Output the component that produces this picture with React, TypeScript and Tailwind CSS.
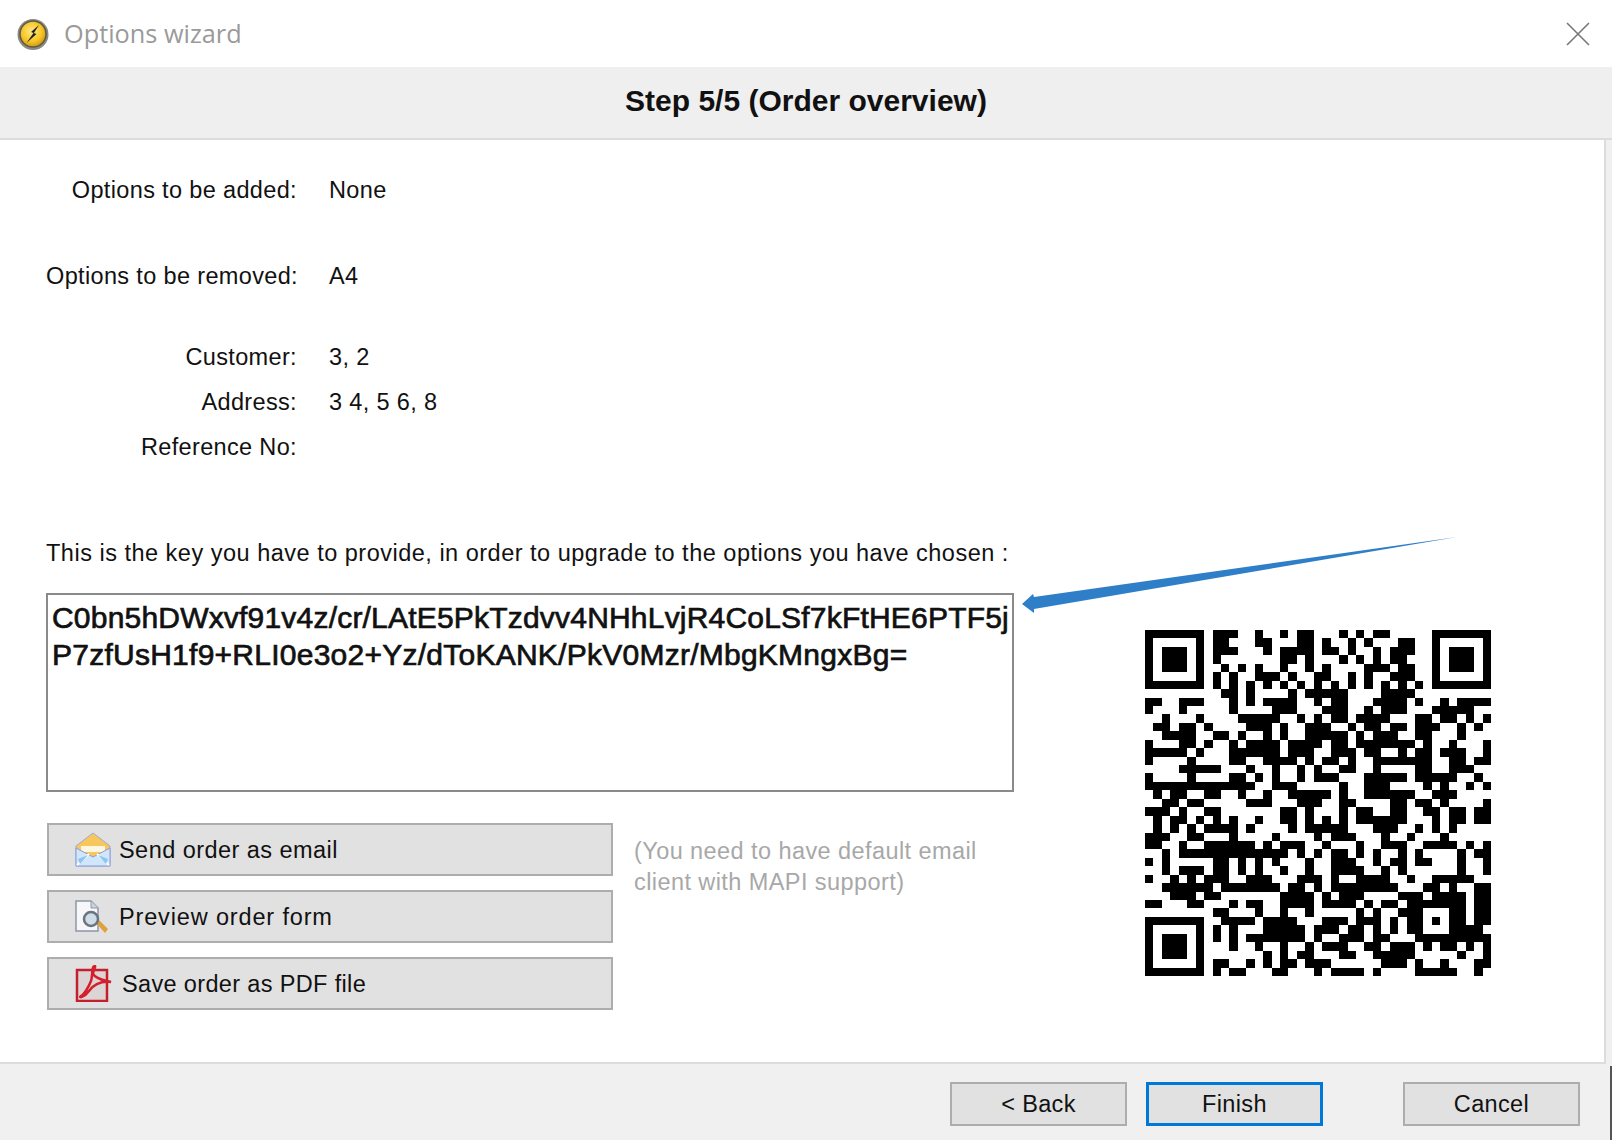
const sans = "font-['Liberation_Sans',Arial,sans-serif]";

// QR modules: one string per row, filled column runs
const qrRows = [
  '0-6 8-10 13 16 18-19 23 25 27-28 34-40',
  '0 6 8-9 13-14 18-19 21 24 26 30-31 34 40',
  '0 2-4 6 8-10 14 16-19 21-22 24 27 29-31 34 36-38 40',
  '0 2-4 6 8 16-17 19 23 25 27 29-30 34 36-38 40',
  '0 2-4 6 9 11 13 16 19 21 26-28 30-31 34 36-38 40',
  '0 6 8 10 13-15 17 20-21 24 26 29-31 34 40',
  '0-6 8 10 12 14 16 18 20 22 24 26 28 30 32 34-40',
  '9-10 12 17 19-23 28-31',
  '0-1 4-6 10 12 14-17 20 22-23 27-30 32 35 37-40',
  '0 4 10 15-17 21-23 26 28-30 34-38',
  '2 6 11-15 18 20 22-23 25-28 32-33 35-36 38 40',
  '1-2 4-5 7 12-14 16 19-21 24 26-27 29-30 32-34 37 39',
  '2-5 8-9 11 14 16 19-23 25 27-29 32-33 37',
  '0 4-5 7 10 12-15 17-20 22-23 25-31 33 36 40',
  '0-4 6 10-15 17-19 22-24 26-27 30 32-33 35-37 40',
  '0 5 10-11 14-17 19 21-22 24 27-33 36-37 39-40',
  '4-8 12 15 18 20 23-24 27 32-33 36-38',
  '0 5 10-11 13 15 18 20-22 26-30 32-36 39',
  '0-12 15-17 23 26-28 33 35 38 40',
  '1 3-4 7-8 11 14 17-21 23 26-31 34-36',
  '2-3 5-6 12-14 18-20 23-24 29-30 32-33 35 40',
  '0-2 4 7-8 16-17 19 23 25-26 29-30 33-34 36-37 39-40',
  '1 3-4 6 8 10 13 16-17 19 21 23 25-30 34 36-37 39-40',
  '1 3 5 7-10 12 17 19-23 27-29 32 34 36',
  '0-2 5-6 10 15 20 22-24 28 31 35',
  '0-1 4 7-12 14 16-18 21 25 28-30 33-36 38 40',
  '2 4-16 18 20 22-23 25 27 30 32 37 39-40',
  '0 2 8-9 11 13 15 19 22-24 27 29-30 32-33 37 40',
  '2 4-6 8-9 11 13 16 19 22-25 28 30 37 40',
  '0 3 5 7-9 12-14 18-20 22 25-28 31 34-38',
  '2-7 9-15 17-18 20 22-29 33-34 36 39-40',
  '3-5 7-8 16-19 21 23-25 30-32 34-37 39-40',
  '0-1 5-6 10 12-13 16-19 21-24 26 28-29 31-37 39-40',
  '8-9 13 16 19 25 27 30-32 36-37 39-40',
  '0-6 9-12 14-17 21-23 25-27 29 31-32 34 36-37 39-40',
  '0 6 8 10 14-18 20-22 24-25 27 29 31-32 36-39',
  '0 2-4 6 8 10 12-18 20 23-25 27-28 32-40',
  '0 2-4 6 10 13 16 19 21-23 26-27 29-31 33 35-36 38 40',
  '0 2-4 6 14 16 18-19 23-24 27-31 37 40',
  '0 6 8-9 12 14 16-17 19-21 28-30 32 35 39-40',
  '0-6 8 10-11 15-16 20 22-25 27 32-36 39',
];

const qrPath = qrRows
  .map((row, y) =>
    row
      .split(' ')
      .map((run) => {
        const [a, b] = run.split('-').map(Number);
        const w = (b ?? a) - a + 1;
        return `M${a} ${y}h${w}v1h-${w}z`;
      })
      .join(''),
  )
  .join('');

const QrCode = () => (
  <svg width="346" height="346" viewBox="0 0 41 41" shapeRendering="crispEdges">
    <path d={qrPath} fill="#000" />
  </svg>
);

const BoltIcon = () => (
  <svg width="32" height="32" viewBox="0 0 32 32">
    <defs>
      <radialGradient id="coin" cx="0.45" cy="0.4" r="0.65">
        <stop offset="0" stopColor="#ffe98a" />
        <stop offset="0.6" stopColor="#f6c522" />
        <stop offset="1" stopColor="#c88f10" />
      </radialGradient>
    </defs>
    <circle cx="16" cy="16.5" r="15.5" fill="#8a8a80" />
    <circle cx="16" cy="16" r="13" fill="url(#coin)" stroke="#5f5a48" strokeWidth="1.5" />
    <path d="M22 7l-8 7 2.5 1-7 10 10-9-2.6-1z" fill="#222" />
  </svg>
);

const MailIcon = () => (
  <svg width="36" height="35" viewBox="0 0 36 35">
    <path d="M1 14L18 1l17 13v20H1z" fill="#f8c75c" stroke="#9fa8d8" />
    <path d="M6 14h24v6H6z" fill="#fdf6e0" />
    <path d="M1 16l17 9 17-9v18H1z" fill="#cfe6fb" stroke="#8f9bd6" />
    <path d="M2 33l12-11M34 33L22 22" stroke="#fff" strokeWidth="2" />
    <path d="M3 27l10-4-8 9z" fill="#8fc4f2" />
    <path d="M33 27l-10-4 8 9z" fill="#8fc4f2" />
  </svg>
);

const PreviewIcon = () => (
  <svg width="34" height="34" viewBox="0 0 34 34">
    <path d="M1 1h15l7 7v23H1z" fill="#f7f7fa" stroke="#8d97a8" strokeWidth="1.5" />
    <path d="M16 1v7h7" fill="#cdd3dc" stroke="#8d97a8" />
    <path d="M21 23l3-3 9 9-3 4z" fill="#e0a03c" />
    <circle cx="16" cy="19" r="7" fill="#cfdde8" stroke="#6a7480" strokeWidth="2.5" />
  </svg>
);

const PdfIcon = () => (
  <svg width="37" height="37" viewBox="0 0 37 37">
    <path d="M2 5h30v31H2z" fill="#ddd5d5" stroke="#c4202c" strokeWidth="2.5" />
    <path
      d="M20 1c-4 0-2 10-4 15S9 30 6 31c-3 2 3 2 8-5s12-10 22-9c-6-2-14-2-18-8 0-3 3-7 2-8z"
      fill="none"
      stroke="#d3202c"
      strokeWidth="2.5"
    />
  </svg>
);

const ActionButton = ({ icon, label, className }: { icon: React.ReactNode; label: string; className: string }) => (
  <button className={`flex h-[53px] w-[566px] items-center border-2 border-[#adadad] bg-[#e1e1e1] pl-[26px] text-[23.5px] text-[#111] ${className}`}>
    {icon}
    <span className="pt-[3px]">{label}</span>
  </button>
);

const InfoRow = ({ label, value, className }: { label: string; value?: string; className: string }) => (
  <div className={`flex h-[30px] items-center text-[23.5px] tracking-[0.35px] text-[#111] ${className}`}>
    <span className="w-[251px] whitespace-nowrap text-right">{label}</span>
    <span className="ml-[32px]">{value}</span>
  </div>
);

const FooterButton = ({ label, focused }: { label: string; focused?: boolean }) => (
  <button
    className={`flex h-[44px] w-[177px] items-center justify-center bg-[#e1e1e1] pt-[2px] text-[23.5px] tracking-[0.35px] text-[#111] ${
      focused ? 'border-[3px] border-[#0078d7]' : 'border-2 border-[#adadad]'
    }`}
  >
    {label}
  </button>
);

export default function App() {
  return (
    <div className={`relative flex h-[1140px] w-[1612px] flex-col overflow-hidden bg-[#f0f0f0] ${sans}`}>
      {/* Title bar */}
      <div className="flex h-[67px] items-center bg-white pl-[17px] pr-[22px]">
        <BoltIcon />
        <span className="ml-[15px] font-['Open_Sans',sans-serif] text-[25.3px] text-[#9a9a9a]">Options wizard</span>
        <svg className="ml-auto" width="24" height="24" viewBox="0 0 24 24">
          <path d="M1 1l22 22M23 1L1 23" stroke="#777" strokeWidth="1.6" fill="none" />
        </svg>
      </div>

      {/* Step header */}
      <div className="flex h-[73px] items-center justify-center border-b-2 border-[#dcdcdc] bg-[#efefef] pb-[5px]">
        <h1 className="text-[30px] font-bold text-[#111]">Step 5/5 (Order overview)</h1>
      </div>

      {/* Content */}
      <div className="h-[924px] w-[1606px] border-b-2 border-r-2 border-[#dcdcdc] bg-white pl-[46px] pt-[36px]">
        <InfoRow label="Options to be added:" value="None" className="" />
        <InfoRow label="Options to be removed:" value="A4" className="mt-[56px]" />
        <InfoRow label="Customer:" value="3, 2" className="mt-[51px]" />
        <InfoRow label="Address:" value="3 4, 5 6, 8" className="mt-[15px]" />
        <InfoRow label="Reference No:" className="mt-[15px]" />

        <div className="mt-[75px] flex">
          <div className="w-[968px]">
            <p className="h-[30px] whitespace-nowrap text-[23.5px] leading-[30px] tracking-[0.5px] text-[#111]">
              This is the key you have to provide, in order to upgrade to the options you have chosen :
            </p>
            <div className="mt-[25px] h-[199px] border-2 border-[#8a8a8a] bg-white px-[4px] pt-[4px] text-[30px] font-medium leading-[37px] tracking-[0.2px] text-[#111] [-webkit-text-stroke:0.7px_#111]">
              <div className="whitespace-nowrap">C0bn5hDWxvf91v4z/cr/LAtE5PkTzdvv4NHhLvjR4CoLSf7kFtHE6PTF5j</div>
              <div className="whitespace-nowrap tracking-[0.25px]">P7zfUsH1f9+RLI0e3o2+Yz/dToKANK/PkV0Mzr/MbgKMngxBg=</div>
            </div>

            <div className="ml-[1px] mt-[31px] flex">
              <div className="flex flex-col gap-[14px]">
                <ActionButton icon={<MailIcon />} label="Send order as email" className="gap-[8px] tracking-[0.45px]" />
                <ActionButton icon={<PreviewIcon />} label="Preview order form" className="gap-[10px] tracking-[0.85px]" />
                <ActionButton icon={<PdfIcon />} label="Save order as PDF file" className="gap-[10px] tracking-[0.35px]" />
              </div>
              <p className="ml-[21px] mt-[13px] text-[23.5px] leading-[31px] tracking-[0.42px] text-[#a8a8a8]">
                (You need to have default email
                <br />
                client with MAPI support)
              </p>
            </div>
          </div>
          <div className="ml-[131px] mt-[92px]">
            <QrCode />
          </div>
        </div>
      </div>

      {/* Footer buttons */}
      <div className="flex flex-1 items-start pl-[950px] pt-[18px]">
        <FooterButton label="< Back" />
        <div className="ml-[19px]">
          <FooterButton label="Finish" focused />
        </div>
        <div className="ml-[80px]">
          <FooterButton label="Cancel" />
        </div>
      </div>
      <div className="absolute bottom-0 right-0 h-[74px] w-[2px] bg-[#555]" />

      {/* Annotation arrow */}
      <svg className="absolute left-0 top-0" width="1612" height="1140" viewBox="0 0 1612 1140" fill="none">
        <path d="M1457 537L1034 597L1033 594L1022 604L1034 613L1034 609z" fill="#2f7fc8" />
      </svg>
    </div>
  );
}
